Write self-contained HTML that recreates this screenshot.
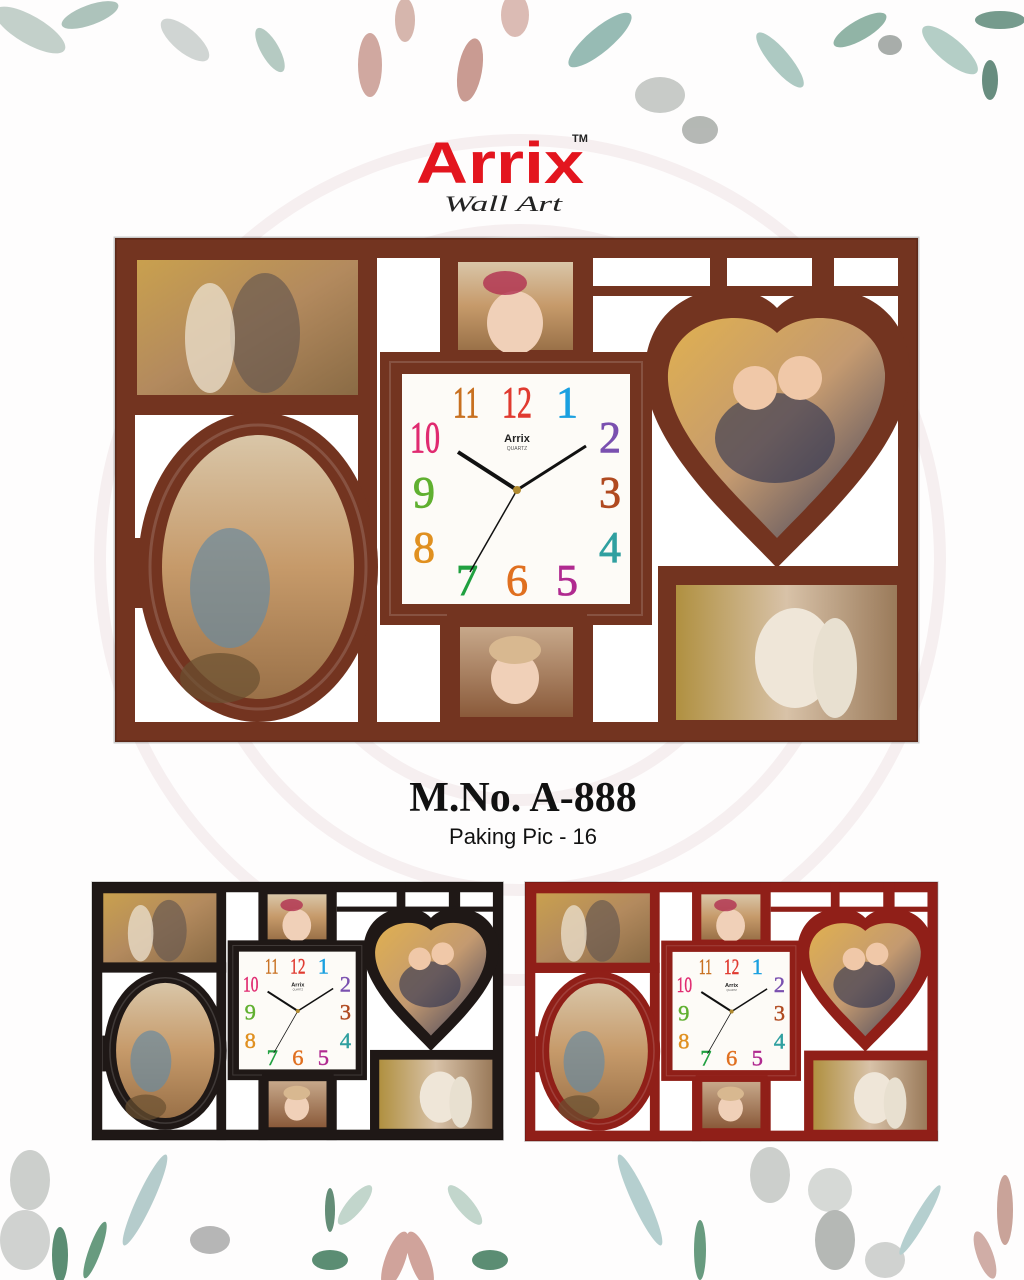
<!DOCTYPE html>
<html><head><meta charset="utf-8"><style>
html,body{margin:0;padding:0;background:#fff}
#w{position:relative;width:1024px;height:1280px;overflow:hidden;background:#fefdfd}
svg{position:absolute;left:0;top:0}
</style></head><body><div id="w">
<svg width="1024" height="1280" viewBox="0 0 1024 1280">
<defs>
<linearGradient id="p1" x1="0" y1="0" x2="1" y2="1"><stop offset="0" stop-color="#c9a04e"/><stop offset=".5" stop-color="#b38a5e"/><stop offset="1" stop-color="#8a6b45"/></linearGradient>
<linearGradient id="p2" x1="0" y1="0" x2="0" y2="1"><stop offset="0" stop-color="#d9c6a8"/><stop offset=".5" stop-color="#c69a6a"/><stop offset="1" stop-color="#9a7148"/></linearGradient>
<linearGradient id="p3" x1="0" y1="0" x2="1" y2="1"><stop offset="0" stop-color="#e0b050"/><stop offset=".5" stop-color="#c49a70"/><stop offset="1" stop-color="#3a3d5a"/></linearGradient>
<linearGradient id="p4" x1="0" y1="0" x2="1" y2="0"><stop offset="0" stop-color="#b09040"/><stop offset=".5" stop-color="#d8c2a8"/><stop offset="1" stop-color="#9a7a5a"/></linearGradient>
<linearGradient id="p5" x1="0" y1="0" x2="0" y2="1"><stop offset="0" stop-color="#c7a88a"/><stop offset="1" stop-color="#8a5a3a"/></linearGradient>
<g id="fr">
 <rect x="0" y="0" width="803" height="504" fill="currentColor"/>
 <rect x="20" y="20" width="763" height="464" fill="#fff"/>
 <rect x="243" y="0" width="19" height="504" fill="currentColor"/>
 <rect x="325" y="0" width="18" height="504" fill="currentColor"/>
 <rect x="458" y="0" width="20" height="504" fill="currentColor"/>
 <rect x="595" y="0" width="17" height="70" fill="currentColor"/>
 <rect x="697" y="0" width="22" height="70" fill="currentColor"/>
 <rect x="478" y="48" width="310" height="10" fill="currentColor"/>
 <rect x="0" y="157" width="262" height="20" fill="currentColor"/>
 <rect x="20" y="300" width="10" height="70" fill="currentColor"/>
 <rect x="5" y="5" width="253" height="167" fill="currentColor"/>
 <rect x="22" y="22" width="221" height="135" fill="url(#p1)"/>
 <ellipse cx="150" cy="95" rx="35" ry="60" fill="#6a5a50" opacity=".7"/><ellipse cx="95" cy="100" rx="25" ry="55" fill="#e8dcc8" opacity=".8"/>
 <rect x="330" y="10" width="140" height="110" fill="currentColor"/>
 <rect x="343" y="24" width="115" height="88" fill="url(#p2)"/>
 <ellipse cx="400" cy="85" rx="28" ry="32" fill="#f0d0b8"/><ellipse cx="390" cy="45" rx="22" ry="12" fill="#b03050" opacity=".8"/>
 <ellipse cx="143" cy="329" rx="120" ry="155" fill="currentColor"/>
 <ellipse cx="143" cy="329" rx="108" ry="142" fill="none" stroke="#fff" stroke-opacity=".15" stroke-width="3"/>
 <ellipse cx="143" cy="329" rx="96" ry="132" fill="url(#p2)"/>
 <ellipse cx="115" cy="350" rx="40" ry="60" fill="#6a8aa0" opacity=".7"/><ellipse cx="105" cy="440" rx="40" ry="25" fill="#6a5030" opacity=".7"/>
 <rect x="265" y="114" width="272" height="273" fill="currentColor"/>
 <rect x="275" y="124" width="252" height="253" fill="none" stroke="#fff" stroke-opacity=".15" stroke-width="2"/>
 <rect x="287" y="136" width="228" height="230" fill="#fdfbf7"/>
 <g font-family="Liberation Serif,serif" font-size="44" text-anchor="middle" stroke-width=".8">
  <text x="351" y="179" fill="#c87020" stroke="#c87020" textLength="26" lengthAdjust="spacingAndGlyphs">11</text>
  <text x="402" y="179" fill="#e03a30" stroke="#e03a30" textLength="30" lengthAdjust="spacingAndGlyphs">12</text>
  <text x="452" y="179" fill="#1aa0e0" stroke="#1aa0e0">1</text>
  <text x="310" y="214" fill="#e02a70" stroke="#e02a70" textLength="30" lengthAdjust="spacingAndGlyphs">10</text>
  <text x="495" y="214" fill="#7a50b0" stroke="#7a50b0">2</text>
  <text x="309" y="269" fill="#60b030" stroke="#60b030">9</text>
  <text x="495" y="269" fill="#b04a20" stroke="#b04a20">3</text>
  <text x="309" y="324" fill="#e09020" stroke="#e09020">8</text>
  <text x="495" y="324" fill="#30a0a0" stroke="#30a0a0">4</text>
  <text x="352" y="357" fill="#20a040" stroke="#20a040">7</text>
  <text x="402" y="357" fill="#e07020" stroke="#e07020">6</text>
  <text x="452" y="357" fill="#b02a90" stroke="#b02a90">5</text>
 </g>
 <text x="402" y="204" font-family="Liberation Sans,sans-serif" font-weight="bold" font-size="11" text-anchor="middle" fill="#222">Arrix</text>
 <text x="402" y="212" font-family="Liberation Sans,sans-serif" font-size="5" text-anchor="middle" fill="#555">QUARTZ</text>
 <line x1="402" y1="252" x2="343" y2="214" stroke="#111" stroke-width="4"/>
 <line x1="402" y1="252" x2="471" y2="208" stroke="#111" stroke-width="3"/>
 <line x1="402" y1="252" x2="355" y2="334" stroke="#111" stroke-width="1.5"/>
 <circle cx="402" cy="252" r="4" fill="#b08a30"/>
 <path d="M662 70 C630 35 535 45 530 130 C527 205 620 285 662 330 C705 285 797 205 795 130 C790 45 695 35 662 70 Z" fill="currentColor"/>
 <path d="M662 95 C635 68 558 75 553 135 C550 195 625 260 662 300 C700 260 772 195 770 135 C765 75 690 68 662 95 Z" fill="url(#p3)"/>
 <ellipse cx="660" cy="200" rx="60" ry="45" fill="#2a3050" opacity=".6"/><circle cx="640" cy="150" r="22" fill="#f0c8a8"/><circle cx="685" cy="140" r="22" fill="#f0c8a8"/>
 <rect x="543" y="328" width="257" height="171" fill="currentColor"/>
 <rect x="561" y="347" width="221" height="135" fill="url(#p4)"/>
 <ellipse cx="680" cy="420" rx="40" ry="50" fill="#efe6d8"/><ellipse cx="720" cy="430" rx="22" ry="50" fill="#e8e0d0"/>
 <rect x="332" y="376" width="140" height="115" fill="currentColor"/>
 <rect x="345" y="389" width="113" height="90" fill="url(#p5)"/>
 <ellipse cx="400" cy="440" rx="24" ry="26" fill="#f0d0b8"/><ellipse cx="400" cy="412" rx="26" ry="14" fill="#d8b890"/>
 <rect x="0" y="484" width="803" height="20" fill="currentColor"/>
 <rect x="0" y="0" width="803" height="504" fill="none" stroke="#000" stroke-opacity=".2" stroke-width="3"/>
</g>
</defs>
<g fill="none" stroke="#f6eff0" stroke-width="12">
 <circle cx="520" cy="560" r="420"/><circle cx="520" cy="560" r="330"/><circle cx="520" cy="560" r="240"/>
</g>
<g opacity=".85">
 <ellipse cx="30" cy="30" rx="40" ry="14" fill="#b9c9c2" transform="rotate(30 30 30)"/>
 <ellipse cx="90" cy="15" rx="30" ry="10" fill="#9fb9b0" transform="rotate(-20 90 15)"/>
 <ellipse cx="185" cy="40" rx="30" ry="12" fill="#c9cfcc" transform="rotate(40 185 40)"/>
 <ellipse cx="270" cy="50" rx="25" ry="9" fill="#a9c2b8" transform="rotate(60 270 50)"/>
 <ellipse cx="370" cy="65" rx="12" ry="32" fill="#c99a90"/>
 <ellipse cx="405" cy="20" rx="10" ry="22" fill="#d0aaa0"/>
 <ellipse cx="470" cy="70" rx="12" ry="32" fill="#c08a80" transform="rotate(10 470 70)"/>
 <ellipse cx="515" cy="15" rx="14" ry="22" fill="#d6b0a8"/>
 <ellipse cx="600" cy="40" rx="40" ry="12" fill="#86b0a8" transform="rotate(-40 600 40)"/>
 <ellipse cx="660" cy="95" rx="25" ry="18" fill="#bfc3bf"/>
 <ellipse cx="700" cy="130" rx="18" ry="14" fill="#a8aca8"/>
 <ellipse cx="780" cy="60" rx="35" ry="10" fill="#9fc0b8" transform="rotate(50 780 60)"/>
 <ellipse cx="860" cy="30" rx="30" ry="10" fill="#7fa898" transform="rotate(-30 860 30)"/>
 <ellipse cx="950" cy="50" rx="35" ry="12" fill="#a8c6bd" transform="rotate(40 950 50)"/>
 <ellipse cx="1000" cy="20" rx="25" ry="9" fill="#5f8a7a"/>
 <ellipse cx="890" cy="45" rx="12" ry="10" fill="#9aa09c"/>
 <ellipse cx="990" cy="80" rx="8" ry="20" fill="#4f7a6a"/>
</g>
<g opacity=".85">
 <ellipse cx="30" cy="1180" rx="20" ry="30" fill="#c4c7c4"/>
 <ellipse cx="25" cy="1240" rx="25" ry="30" fill="#c9cbc9"/>
 <ellipse cx="60" cy="1255" rx="8" ry="28" fill="#3f7a5c"/>
 <ellipse cx="145" cy="1200" rx="8" ry="50" fill="#a9c4c4" transform="rotate(25 145 1200)"/>
 <ellipse cx="95" cy="1250" rx="6" ry="30" fill="#4f8a6a" transform="rotate(20 95 1250)"/>
 <ellipse cx="210" cy="1240" rx="20" ry="14" fill="#aaa"/>
 <ellipse cx="330" cy="1210" rx="5" ry="22" fill="#4a7a60"/>
 <ellipse cx="355" cy="1205" rx="8" ry="25" fill="#b8d0c4" transform="rotate(40 355 1205)"/>
 <ellipse cx="395" cy="1260" rx="10" ry="30" fill="#c9948a" transform="rotate(20 395 1260)"/>
 <ellipse cx="420" cy="1260" rx="10" ry="30" fill="#c9948a" transform="rotate(-20 420 1260)"/>
 <ellipse cx="330" cy="1260" rx="18" ry="10" fill="#3f7a5c"/>
 <ellipse cx="490" cy="1260" rx="18" ry="10" fill="#3f7a5c"/>
 <ellipse cx="465" cy="1205" rx="8" ry="25" fill="#b8d0c4" transform="rotate(-40 465 1205)"/>
 <ellipse cx="640" cy="1200" rx="8" ry="50" fill="#a9c8c8" transform="rotate(-25 640 1200)"/>
 <ellipse cx="700" cy="1250" rx="6" ry="30" fill="#4f8a6a"/>
 <ellipse cx="770" cy="1175" rx="20" ry="28" fill="#c4c7c4"/>
 <ellipse cx="830" cy="1190" rx="22" ry="22" fill="#d0d3d0"/>
 <ellipse cx="835" cy="1240" rx="20" ry="30" fill="#a9aca9"/>
 <ellipse cx="885" cy="1260" rx="20" ry="18" fill="#c9cbc9"/>
 <ellipse cx="920" cy="1220" rx="6" ry="40" fill="#a9c8c8" transform="rotate(30 920 1220)"/>
 <ellipse cx="1005" cy="1210" rx="8" ry="35" fill="#c09488"/>
 <ellipse cx="985" cy="1255" rx="8" ry="25" fill="#c8a098" transform="rotate(-20 985 1255)"/>
</g>
<text x="500" y="183" font-family="Liberation Sans,sans-serif" font-weight="bold" font-size="58" text-anchor="middle" fill="#e3151e" textLength="168" lengthAdjust="spacingAndGlyphs">Arrix</text>
<text x="572" y="142" font-family="Liberation Sans,sans-serif" font-weight="bold" font-size="11" fill="#222">TM</text>
<text x="503" y="211" font-family="Liberation Serif,serif" font-style="italic" font-size="22" text-anchor="middle" fill="#222" textLength="118" lengthAdjust="spacingAndGlyphs">Wall Art</text>
<use href="#fr" transform="translate(115 238)" style="color:#733420"/>
<use href="#fr" transform="translate(92 882) scale(0.512)" style="color:#1f1816"/>
<use href="#fr" transform="translate(525 882) scale(0.514)" style="color:#901f18"/>
<text x="523" y="811" font-family="Liberation Serif,serif" font-weight="bold" font-size="42" text-anchor="middle" fill="#111">M.No. A-888</text>
<text x="523" y="844" font-family="Liberation Sans,sans-serif" font-size="22" text-anchor="middle" fill="#111">Paking Pic - 16</text>
</svg>
</div></body></html>
